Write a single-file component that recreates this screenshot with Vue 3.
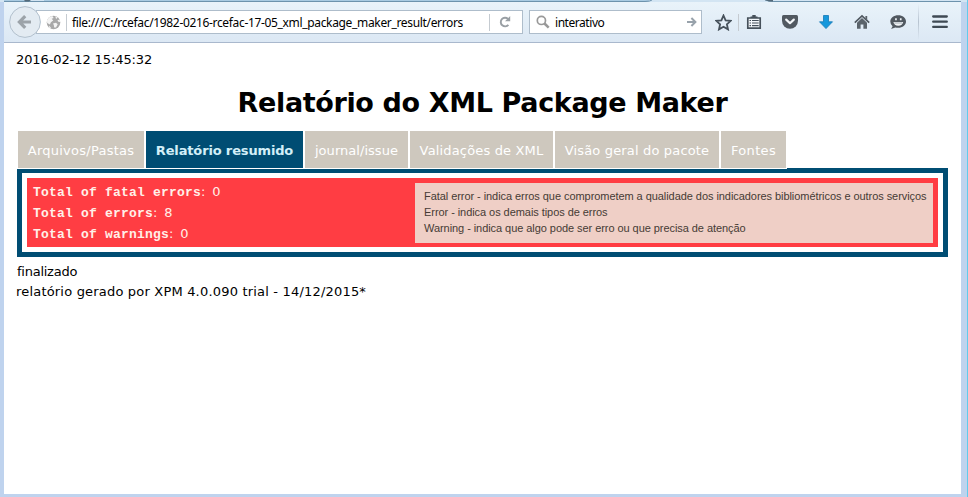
<script setup>
const tabs = [
  { label: 'Arquivos/Pastas', width: 126, spacing: 0.25 },
  { label: 'Relatório resumido', width: 157, spacing: -0.15, active: true },
  { label: 'journal/issue', width: 103, spacing: 0.04 },
  { label: 'Validações de XML', width: 143, spacing: 0.16 },
  { label: 'Visão geral do pacote', width: 164, spacing: 0.16 },
  { label: 'Fontes', width: 65, spacing: 0.35 },
]
const totals = [
  { label: 'Total of fatal errors', value: 0 },
  { label: 'Total of errors', value: 8 },
  { label: 'Total of warnings', value: 0 },
]
</script>

<template>
  <div class="window">
    <div class="strip">
      <svg width="968" height="3" viewBox="0 0 968 3">
        <rect width="968" height="3" fill="#d3e5f3" />
        <path d="M4 0H24V1.5H4ZM44 0H650Q648 2 644 2H4V1H44Z" fill="#a9cbe2" />
        <path d="M4 1.5H645Q650 1.5 652 0M765 0Q769 1.5 774 1.5H961" fill="none" stroke="#6d93ad" />
        <path d="M24 0h7l-2 1.5h-4zM765 0h8v1.5h-4z" fill="#536a7b" />
      </svg>
    </div>
    <div class="frame">
      <header class="toolbar">
        <svg class="back" width="32" height="32" viewBox="0 0 32 32">
          <circle cx="16" cy="16" r="15.4" fill="#e3ebf2" stroke="#b2c0cd" />
          <path d="M22 16H11M16.2 10.2L10.4 16l5.8 5.8" fill="none" stroke="#9ca3a9" stroke-width="3.2" />
        </svg>
        <div class="address">
          <svg class="globe" width="15" height="15" viewBox="0 0 15 15">
            <circle cx="7.5" cy="7.5" r="6.8" fill="#a9a9a9" />
            <path d="M1 5.2Q3 1.4 6.3 1l1.4 2-2 .8 1.5 1.8-2.3 1.6-1 2.2L1.1 8zM9.2 1.2l2.5 1.3-1.6 1.4zM7 8.5l3-.8 1.7 1.6-1.7 3.3-1.8-.2-.4-2.4zM11.5 5l2.2-.2.4 2.2-1.8-.2zM3 10.8l1.8 1.8.2 1.2L3 12.4z" fill="#f4f4f4" />
          </svg>
          <span class="rule"></span>
          <span class="url">file:///C:/rcefac/1982-0216-rcefac-17-05_xml_package_maker_result/errors</span>
          <span class="rule reload-rule"></span>
          <svg class="reload" width="12" height="12" viewBox="0 0 12 12">
            <path d="M9.4 8.8A4.3 4.3 0 1 1 9 2.9" fill="none" stroke="#999fa4" stroke-width="1.9" />
            <path d="M11.2 0v5.2H6z" fill="#999fa4" />
          </svg>
        </div>
        <div class="search">
          <svg width="14" height="14" viewBox="0 0 14 14" fill="none" stroke="#999">
            <circle cx="5.4" cy="5.4" r="4.1" stroke-width="1.7" />
            <path d="M8.5 8.5l4.2 4.2" stroke-width="2.5" />
          </svg>
          <span class="query">interativo</span>
          <svg class="go" width="10" height="10" viewBox="0 0 10 10" fill="none" stroke="#98a2ab" stroke-width="2">
            <path d="M0 5h8M4.4 1L8.4 5l-4 4" />
          </svg>
        </div>
        <svg class="star" width="17" height="17" viewBox="0 0 17 17">
          <path d="M8.5 1.5l2.1 4.8 5.1.5-3.8 3.5 1.1 5.1-4.5-2.6L4 15.4l1.1-5.1-3.8-3.5 5.1-.5z" fill="none" stroke="#46515b" stroke-width="1.8" />
        </svg>
        <span class="rule star-rule"></span>
        <div class="actions">
          <svg width="16" height="16" viewBox="0 0 16 16">
            <path d="M1.8 4h12.4v10.2H1.8z" fill="#f2f6fa" stroke="#46515b" stroke-width="1.7" />
            <path d="M4.5 4V2.4h1.8V1h3.4v1.4h1.8V4z" fill="#46515b" />
            <path d="M3.5 6.5H5m1 0h6.7M3.5 9H5m1 0h6.7m-9.2 2.7H5m1 0h6.7" stroke="#46515b" stroke-width="1.2" />
          </svg>
          <svg width="16" height="16" viewBox="0 0 16 16">
            <path d="M1.5 1h13q1.5 0 1.5 1.5v4.3a8 8 0 0 1-16 0V2.5q0-1.5 1.5-1.5z" fill="#515961" />
            <path d="M4.2 5.6l3.8 3.6 3.8-3.6" fill="none" stroke="#f3f6f9" stroke-width="2.2" stroke-linecap="round" stroke-linejoin="round" />
          </svg>
          <svg width="16" height="16" viewBox="0 0 16 16">
            <path d="M5.5 1.5h5v6.3h4L8 14.6 1.5 7.8h4z" fill="#1698dc" stroke="#1379b6" stroke-width=".8" />
          </svg>
          <svg width="16" height="16" viewBox="0 0 16 16">
            <path d="M.8 8.6L8 1.9l7.2 6.7" fill="none" stroke="#515961" stroke-width="1.7" />
            <path d="M3 8.7l5-4.6 5 4.6v6H9.4v-4.2H6.6v4.2H3zM11.4 2h1.8v4l-1.8-1.6z" fill="#5b636b" />
          </svg>
          <svg width="16" height="16" viewBox="0 0 16 16">
            <path d="M8.2 1.2c4.4 0 7.8 2.7 7.8 6.3s-3.4 6.3-7.8 6.3q-1.6 0-2.9-.4L1.1 15l1.5-2.8Q.3 10.3.3 7.5c0-3.6 3.5-6.3 7.9-6.3z" fill="#515961" />
            <path d="M5.1 4.3h1.7v2H5.1zm4.8 0h1.7v2H9.9zM3.4 8.1h9.8q-.7 3.7-4.9 3.7T3.4 8.1z" fill="#f0f4f7" />
            <path d="M4.3 9h8" stroke="#89939c" stroke-width=".7" />
          </svg>
        </div>
        <span class="menu-rule"></span>
        <svg class="menu" width="16" height="14" viewBox="0 0 16 14">
          <path d="M1.2 1.5h13.6M1.2 6.7h13.6M1.2 11.9h13.6" stroke="#3f4a54" stroke-width="2.3" stroke-linecap="round" />
        </svg>
      </header>

      <main>
        <p class="date">2016-02-12 15:45:32</p>
        <h1>Relatório do XML Package Maker</h1>
        <nav class="tabs">
          <a v-for="tab in tabs" :key="tab.label" :class="{ active: tab.active }" :style="{ width: tab.width + 'px', letterSpacing: tab.spacing + 'px' }">{{ tab.label }}</a>
        </nav>
        <section class="report">
          <div class="summary">
            <div class="totals">
              <p v-for="t in totals" :key="t.label"><b>{{ t.label }}</b><span class="colon">: </span>{{ t.value }}</p>
            </div>
            <div class="legend">
              <p>Fatal error - indica erros que comprometem a qualidade dos indicadores bibliométricos e outros serviços</p>
              <p>Error - indica os demais tipos de erros</p>
              <p>Warning - indica que algo pode ser erro ou que precisa de atenção</p>
            </div>
          </div>
        </section>
        <p class="done">finalizado</p>
        <p class="generated">relatório gerado por XPM 4.0.090 trial - 14/12/2015*</p>
      </main>
    </div>
  </div>
</template>

<style>
body { margin: 0; overflow: hidden; }
</style>

<style scoped>
* { box-sizing: border-box; }
p, h1 { margin: 0; font-weight: normal; white-space: nowrap; }
svg { display: block; flex: none; }
.window {
  width: 968px; height: 497px; background: #bfd3ee;
  border-right: 1px solid #61cbec; overflow: hidden;
  font-family: Verdana, "DejaVu Sans", sans-serif; font-size: 13px; color: #000;
}
.strip { height: 2px; overflow: hidden; }
.frame { width: 957px; height: 492px; margin-left: 4px; background: #fff; }
.toolbar {
  height: 41px; display: flex; align-items: center; padding-left: 5px;
  background: linear-gradient(#e9f3fa, #dce8f4); border-bottom: 1px solid #a9b8cd;
  font-family: "Noto Sans", sans-serif; font-size: 12px;
}
.back { z-index: 1; }
.address {
  width: 487px; height: 24px; margin-left: -5px; padding-left: 9px;
  display: flex; align-items: center; background: #fff; border: 1px solid #aebdcb;
}
.rule { width: 1px; height: 17px; background: #c5cbd1; flex: none; }
.globe + .rule { margin-left: 5px; }
.url { width: 417px; margin-left: 5px; letter-spacing: -0.335px; white-space: nowrap; }
.reload { margin-left: 9px; }
.search {
  width: 173px; height: 24px; margin-left: 6px; padding: 0 4px 0 6px;
  display: flex; align-items: center; background: #fff; border: 1px solid #aebdcb;
}
.query { flex: 1; margin-left: 5px; letter-spacing: -0.45px; }
.star { margin-left: 13px; }
.star-rule { margin-left: 6px; }
.actions { display: flex; gap: 20px; margin-left: 7px; }
.menu-rule { width: 1px; height: 36px; margin-left: 12px; background: linear-gradient(transparent, #b7c3d0, transparent); }
.menu { margin-left: 13px; }
main { padding: 9px 13px 0; }
.date { height: 16px; line-height: 16px; margin-left: -1px; letter-spacing: -0.1px; }
h1 {
  height: 42px; margin-top: 14px; line-height: 42px; text-align: center;
  font-size: 27px; font-weight: bold; letter-spacing: -0.36px;
}
.tabs {
  display: flex; gap: 2px; width: 770px; height: 38px; margin: 7px 0 -1px; padding-left: 1px;
  border-bottom: 1px solid #fff; position: relative; z-index: 1;
}
.tabs a {
  height: 37px; line-height: 39px; text-align: center; white-space: nowrap;
  background: #cec8be; color: #fff; flex: none;
}
.tabs .active { background: #004d73; color: #d2eff8; font-weight: bold; }
.report { width: 931px; height: 89px; border: 5px solid #004d73; padding: 5px; }
.summary {
  height: 69px; background: #ff3d43; display: flex; justify-content: space-between;
  padding: 5px 5px 4px 6px;
}
.totals { color: #fff0e8; margin-top: -2px; }
.totals p { height: 21px; line-height: 21px; }
.totals b { font-family: "Courier New", "Liberation Mono", monospace; letter-spacing: 0.2px; }
.colon { letter-spacing: 1.3px; white-space: pre; }
.legend {
  width: 518px; height: 60px; padding: 5px 0 0 9px; background: #efcfc6;
  color: #463b35; font-family: "Liberation Sans", sans-serif; font-size: 11px;
  letter-spacing: -0.06px;
}
.legend p { height: 16px; line-height: 16px; }
.done { height: 20px; line-height: 20px; margin-top: 5px; letter-spacing: -0.25px; }
.generated { height: 20px; line-height: 20px; margin-left: -1px; letter-spacing: 0.19px; }
</style>
